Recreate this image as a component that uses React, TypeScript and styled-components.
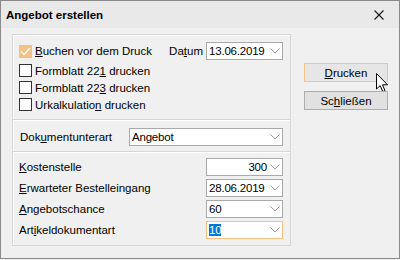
import React from 'react';
import styled, { createGlobalStyle } from 'styled-components';

const GlobalStyle = createGlobalStyle`
	html, body {
		margin: 0;
		padding: 0;
		background: #f0f0f0;
	}
	body {
		font-family: 'Liberation Sans', Arial, sans-serif;
		font-size: 11.5px;
		color: #000;
	}
`;

const Window = styled.div`
	width: 400px;
	height: 259px;
	box-sizing: border-box;
	border: 1px solid #8a8a8a;
	background: #f0f0f0;
	display: flex;
	flex-direction: column;
`;

const TitleBar = styled.div`
	height: 27px;
	flex: 0 0 27px;
	display: flex;
	align-items: center;
	justify-content: space-between;
	padding: 0 15px 0 5px;
	background: #e9e9e9;
`;

const Title = styled.span`
	font-weight: 700;
	font-size: 11.5px;
`;

const Body = styled.div`
	display: flex;
	padding: 6px 0 0 11px;
	gap: 13px;
`;

const Panel = styled.div`
	width: 279px;
	box-sizing: border-box;
	border: 1px solid #d7d7d7;
	box-shadow: inset 1px 1px 0 #fff;
	display: flex;
	flex-direction: column;
`;

const Section = styled.div<{ $top?: number; $bottom?: number; $divider?: boolean }>`
	padding: ${(p) => p.$top ?? 0}px 7px ${(p) => p.$bottom ?? 0}px 6px;
	border-top: ${(p) => (p.$divider ? '1px solid #d7d7d7' : 'none')};
	box-shadow: ${(p) => (p.$divider ? 'inset 0 1px 0 #fff' : 'none')};
	display: flex;
	flex-direction: column;
`;

const Row = styled.div<{ $h?: number; $gap?: number }>`
	height: ${(p) => p.$h ?? 18}px;
	margin-bottom: ${(p) => p.$gap ?? 0}px;
	display: flex;
	align-items: center;
`;

const Rows = styled.div`
	display: flex;
	flex-direction: column;
	gap: 3px;
`;

const Box = styled.span<{ $checked?: boolean }>`
	width: 13px;
	height: 13px;
	box-sizing: border-box;
	flex: 0 0 13px;
	border: 1px solid ${(p) => (p.$checked ? '#f6bf84' : '#333')};
	background: ${(p) => (p.$checked ? '#f6bf84' : '#fff')};
	display: flex;
	align-items: center;
	justify-content: center;
	margin-right: 3px;
`;

const Label = styled.span<{ $pl?: number }>`
	flex: 1;
	padding-left: ${(p) => p.$pl ?? 0}px;
	white-space: nowrap;
`;

const Key = styled.u`
	text-decoration: underline;
	text-underline-offset: 1px;
`;

const SideLabel = styled.span`
	margin-right: 3px;
`;

const Combo = styled.div<{ $w: number; $focus?: boolean }>`
	width: ${(p) => p.$w}px;
	flex: 0 0 ${(p) => p.$w}px;
	height: 18px;
	box-sizing: border-box;
	border: 1px solid ${(p) => (p.$focus ? '#f6bf84' : '#a9a9a9')};
	background: #fff;
	display: flex;
	align-items: center;
	padding: 0 2px 0 2px;
	gap: 3px;

	svg {
		flex: 0 0 auto;
	}
`;

const Value = styled.span<{ $right?: boolean }>`
	flex: 1;
	min-width: 0;
	overflow: hidden;
	letter-spacing: -0.2px;
	text-align: ${(p) => (p.$right ? 'right' : 'left')};
	white-space: nowrap;
`;

const Selected = styled.span`
	background: #0078d7;
	color: #fff;
`;

const Buttons = styled.div`
	display: flex;
	flex-direction: column;
	gap: 9px;
	margin-top: 29px;
`;

const Button = styled.div<{ $hot?: boolean }>`
	position: relative;
	width: 84px;
	height: 19px;
	box-sizing: border-box;
	border: 1px solid ${(p) => (p.$hot ? '#f6c488' : '#adadad')};
	background: ${(p) => (p.$hot ? '#e6e6e6' : '#e1e1e1')};
	display: flex;
	align-items: center;
	justify-content: center;
`;

const Cursor = styled.svg`
	position: absolute;
	left: 71px;
	top: 9px;
`;

const Chevron = () => (
	<svg width="10" height="6" viewBox="0 0 10 6">
		<path d="M0.5 0.5 L5 5 L9.5 0.5" fill="none" stroke="#9a9a9a" strokeWidth="1" />
	</svg>
);

const Check = () => (
	<svg width="11" height="9" viewBox="0 0 11 9">
		<path d="M1 4.5 L4 7.5 L10 1" fill="none" stroke="#fff" strokeWidth="1.3" />
	</svg>
);

const CloseIcon = () => (
	<svg width="10" height="10" viewBox="0 0 10 10">
		<path d="M0.5 0.5 L9.5 9.5 M9.5 0.5 L0.5 9.5" stroke="#1a1a1a" strokeWidth="1.1" />
	</svg>
);

function App() {
	return (
		<>
			<GlobalStyle />
			<Window>
				<TitleBar>
					<Title>Angebot erstellen</Title>
					<CloseIcon />
				</TitleBar>
				<Body>
					<Panel>
						<Section $top={7} $bottom={6}>
							<Row $h={18} $gap={2}>
								<Box $checked>
									<Check />
								</Box>
								<Label>
									<Key>B</Key>uchen vor dem Druck
								</Label>
								<SideLabel>
									Da<Key>t</Key>um
								</SideLabel>
								<Combo $w={77}>
									<Value>13.06.2019</Value>
									<Chevron />
								</Combo>
							</Row>
							<Row $h={17}>
								<Box />
								<Label>
									Formblatt 22<Key>1</Key> drucken
								</Label>
							</Row>
							<Row $h={17}>
								<Box />
								<Label>
									Formblatt 22<Key>3</Key> drucken
								</Label>
							</Row>
							<Row $h={17}>
								<Box />
								<Label>
									Urkalkulatio<Key>n</Key> drucken
								</Label>
							</Row>
						</Section>
						<Section $divider $top={8} $bottom={5}>
							<Row>
								<Label $pl={1}>
									Dok<Key>u</Key>mentunterart
								</Label>
								<Combo $w={154}>
									<Value>Angebot</Value>
									<Chevron />
								</Combo>
							</Row>
						</Section>
						<Section $divider $top={6} $bottom={6}>
							<Rows>
								<Row>
									<Label>
										<Key>K</Key>ostenstelle
									</Label>
									<Combo $w={77}>
										<Value $right>300</Value>
										<Chevron />
									</Combo>
								</Row>
								<Row>
									<Label>
										<Key>E</Key>rwarteter Bestelleingang
									</Label>
									<Combo $w={77}>
										<Value>28.06.2019</Value>
										<Chevron />
									</Combo>
								</Row>
								<Row>
									<Label>
										<Key>A</Key>ngebotschance
									</Label>
									<Combo $w={77}>
										<Value>60</Value>
										<Chevron />
									</Combo>
								</Row>
								<Row>
									<Label>
										Art<Key>i</Key>keldokumentart
									</Label>
									<Combo $w={77} $focus>
										<Value>
											<Selected>10</Selected>
										</Value>
										<Chevron />
									</Combo>
								</Row>
							</Rows>
						</Section>
					</Panel>
					<Buttons>
						<Button $hot>
							<span>
								<Key>D</Key>rucken
							</span>
							<Cursor width="13" height="20" viewBox="0 0 13 20">
								<path
									d="M0.5 0.5 L0.5 16 L4.2 12.6 L6.8 18.6 L9 17.6 L6.5 11.8 L11.5 11.8 Z"
									fill="#fff"
									stroke="#000"
									strokeWidth="1"
									strokeLinejoin="miter"
								/>
							</Cursor>
						</Button>
						<Button>
							<span>
								Sc<Key>h</Key>ließen
							</span>
						</Button>
					</Buttons>
				</Body>
			</Window>
		</>
	);
}

export default App;
